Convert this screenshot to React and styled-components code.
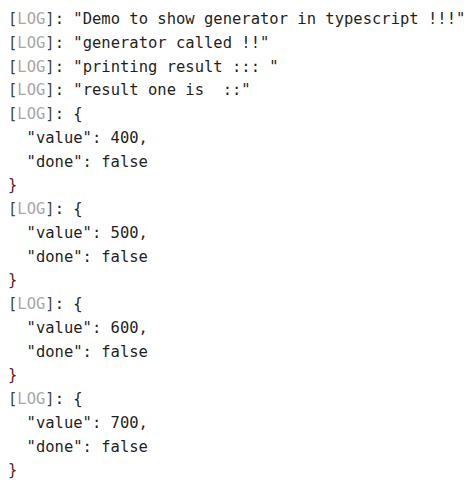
import styled, { createGlobalStyle } from 'styled-components'

const GlobalStyle = createGlobalStyle`
    body {
        margin: 0;
        background: #ffffff;
    }
`

const entries = [
    { text: '"Demo to show generator in typescript !!!"' },
    { text: '"generator called !!"' },
    { text: '"printing result ::: "' },
    { text: '"result one is  ::"' },
    { obj: { value: 400, done: false } },
    { obj: { value: 500, done: false } },
    { obj: { value: 600, done: false } },
    { obj: { value: 700, done: false } },
]

function App() {
    return (
        <>
            <GlobalStyle />
            <Console>
                {entries.map((e, i) => (
                    <Entry key={i}>
                        <Line>
                            <Bracket>[</Bracket><Tag>LOG</Tag><Bracket>]</Bracket>: {e.text ? e.text : '{'}
                        </Line>
                        {e.obj && (
                            <>
                                <Line $indent>"value": {e.obj.value},</Line>
                                <Line $indent>"done": {String(e.obj.done)}</Line>
                                <Brace>{'}'}</Brace>
                            </>
                        )}
                    </Entry>
                ))}
            </Console>
        </>
    )
}

const Console = styled.div`
    display: flex;
    flex-direction: column;
    padding: 8px 8px;
    font-family: 'DejaVu Sans Mono', monospace;
    font-size: 15.5px;
    color: #1f1f1f;
`
const Entry = styled.div`
    display: flex;
    flex-direction: column;
`
const Line = styled.div`
    line-height: 23.75px;
    white-space: pre;
    padding-left: ${p => (p.$indent ? '18.6px' : '0')};
`
const Bracket = styled.span`
    color: #444444;
`
const Tag = styled.span`
    color: #a8a8a8;
`
const Brace = styled.div`
    line-height: 23.75px;
    color: #5c1f1f;
`

export default App
